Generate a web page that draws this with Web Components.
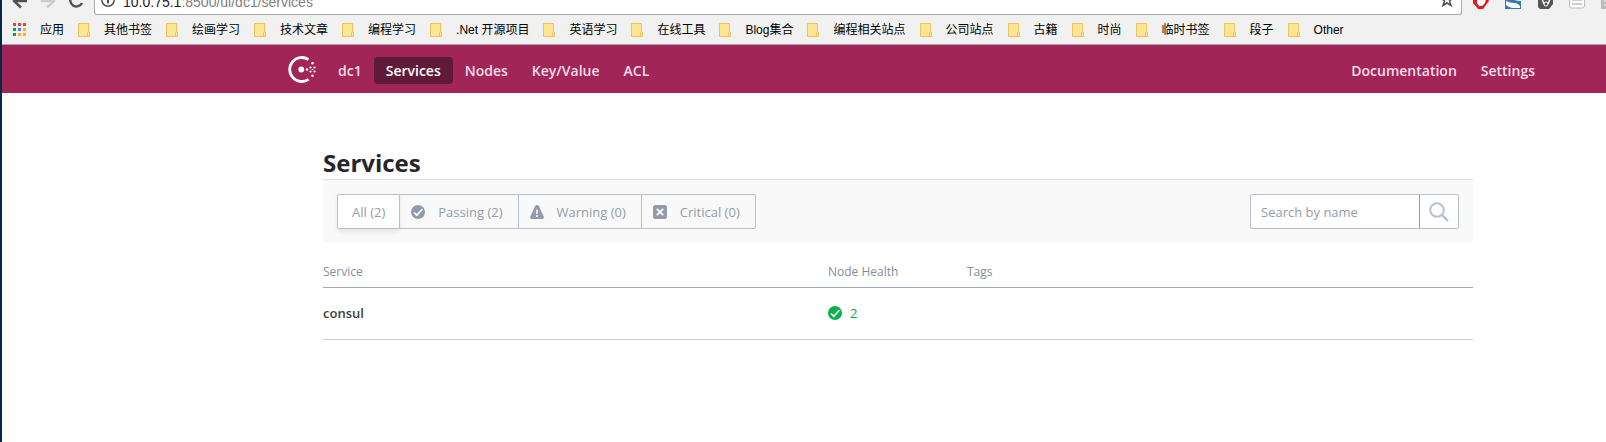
<!DOCTYPE html>
<html lang="zh">
<head>
<meta charset="utf-8">
<title>Consul - Services</title>
<style>
body { margin: 0; background: #fff; font-family: "Open Sans", "Noto Sans CJK SC", sans-serif; }
</style>
</head>
<body>
<browser-window>
  <browser-toolbar slot="chrome"></browser-toolbar>
  <bookmark-bar slot="chrome">
    <bookmark-item apps>应用</bookmark-item>
    <bookmark-item>其他书签</bookmark-item>
    <bookmark-item>绘画学习</bookmark-item>
    <bookmark-item>技术文章</bookmark-item>
    <bookmark-item>编程学习</bookmark-item>
    <bookmark-item>.Net 开源项目</bookmark-item>
    <bookmark-item>英语学习</bookmark-item>
    <bookmark-item>在线工具</bookmark-item>
    <bookmark-item>Blog集合</bookmark-item>
    <bookmark-item>编程相关站点</bookmark-item>
    <bookmark-item>公司站点</bookmark-item>
    <bookmark-item>古籍</bookmark-item>
    <bookmark-item>时尚</bookmark-item>
    <bookmark-item>临时书签</bookmark-item>
    <bookmark-item>段子</bookmark-item>
    <bookmark-item>Other</bookmark-item>
  </bookmark-bar>
  <consul-header>
    <nav-link>dc1</nav-link>
    <nav-link active>Services</nav-link>
    <nav-link>Nodes</nav-link>
    <nav-link>Key/Value</nav-link>
    <nav-link>ACL</nav-link>
    <nav-link slot="end">Documentation</nav-link>
    <nav-link slot="end">Settings</nav-link>
  </consul-header>
  <service-page></service-page>
</browser-window>

<script>
const define = (name, html) => customElements.define(name, class extends HTMLElement {
  constructor() {
    super();
    this.attachShadow({ mode: "open" }).innerHTML = html;
  }
});

define("browser-window", `
<style>
:host { display: block; min-height: 100vh; box-sizing: border-box; border-left: 2px solid #06284a; }
</style>
<slot name="chrome"></slot>
<slot></slot>`);

define("browser-toolbar", `
<style>
:host { display: flex; height: 15px; background: #f1f1f1; overflow: hidden; }
svg { display: block; flex: none; }
.nav { display: flex; width: 92px; flex: none; }
button { padding: 0; border: 0; background: none; height: 15px; }
.address { flex: 1; min-width: 0; box-sizing: border-box; height: 15px; display: flex; align-items: flex-end; justify-content: space-between;
  background: #fff; border: 1px solid #a8a8a8; border-top: 0; border-radius: 0 0 3px 3px; }
.site { display: flex; align-items: flex-end; gap: 6px; }
.url { font: 14px/16px "Liberation Sans", Arial, sans-serif; color: #808080; white-space: nowrap; margin-bottom: 4px; }
.url b { font-weight: 400; color: #222; }
.extensions { display: flex; flex: none; width: 144px; }
</style>
<div class="nav">
  <button aria-label="Back"><svg width="34" height="15" fill="none" stroke="#505050" stroke-width="2.4"><path d="M25 1H12M19 -6L12 1L19 7.500"/></svg></button>
  <button aria-label="Forward"><svg width="26" height="15" fill="none" stroke="#ccc" stroke-width="2.4"><path d="M5 1H18M11 -6L18 1L11 7.500"/></svg></button>
  <button aria-label="Reload"><svg width="32" height="15" fill="none" stroke="#505050" stroke-width="2.4"><path d="M20 3A6.200 6.200 0 1 1 19 -4"/></svg></button>
</div>
<div class="address">
  <div class="site">
    <svg width="22" height="15" fill="none" stroke="#505050" stroke-width="1.500"><circle cx="13" cy="1" r="6.200"/><path d="M13 0V4.500" stroke-width="2"/></svg>
    <span class="url"><b>10.0.75.1</b>:8500/ui/dc1/services</span>
  </div>
  <button aria-label="Bookmark"><svg width="22" height="15" fill="none" stroke="#505050" stroke-width="1.500"><path d="M8 -5L9.500 -1H14L10.500 2L12 6.500L8 4L4 6.500L5.500 2L2 -1H6.500Z"/></svg></button>
</div>
<div class="extensions">
  <svg width="144" height="15">
    <path d="M11 -4H25L27 1L21 9H16L11 3Z" fill="#e5181c"/><path d="M15 -2V3L17 6H20L23 3L24 -1Z" fill="#fff"/>
    <rect x="43" y="-7" width="16" height="16" fill="#3b79b3"/><path d="M44 1Q48 3 52 3T58 6V8H50Q46 7 44 5Z" fill="#fff"/><path d="M50 -1Q54 1 59 1V-1Z" fill="#fff"/>
    <path d="M76 -7H91V4L87 9H78L76 7Z" fill="#555"/><path d="M80 -1L82 4M88 -1L86 4" stroke="#fff" stroke-width="1.500"/><circle cx="84" cy="4" r="2" fill="none" stroke="#fff"/>
    <rect x="107.500" y="-7" width="15" height="15" rx="2" fill="#fff" stroke="#bbb"/><path d="M110 0H120M110 4H120" stroke="#ccc" stroke-width="2"/>
    <path d="M139 -3H144V9H139Z" fill="#bbb"/><path d="M142 1H144M142 5H144" stroke="#fff"/>
  </svg>
</div>`);

define("bookmark-bar", `
<style>
:host { display: flex; align-items: center; gap: 14px; height: 29px; padding: 0 11px; overflow: hidden; background: #f1f1f1; border-bottom: 1px solid #a9a6a8; }
</style>
<slot></slot>`);

define("bookmark-item", `
<style>
:host { display: block; flex: none; }
a { display: flex; align-items: center; gap: 14px; color: #000; text-decoration: none; white-space: nowrap;
  font: 12px/18px "Liberation Sans", "Noto Sans CJK SC", sans-serif; }
svg { display: block; }
.grid { display: none; }
:host([apps]) .grid { display: block; }
:host([apps]) .folder { display: none; }
</style>
<a href="#">
  <svg class="grid" width="13" height="13"><path fill="#ea4335" d="M0 0h3v3H0zM5 0h3v3H5zM10 0h3v3h-3z"/><path fill="#0f9d58" d="M0 5h3v3H0zM0 10h3v3H0z"/><path fill="#4285f4" d="M5 5h3v3H5z"/><path fill="#fbab2b" d="M10 5h3v3h-3zM5 10h3v3H5zM10 10h3v3h-3z"/></svg>
  <svg class="folder" width="12" height="14"><path d="M.5.5h10v9h1v4H.5z" fill="#fde693" stroke="#e8c55c"/><path d="M9.500 9.500v4" stroke="#e8c55c"/></svg>
  <span><slot></slot></span>
</a>`);

define("consul-header", `
<style>
:host { display: block; background: #a22558; }
header { display: flex; align-items: center; height: 48px; padding: 0 59px 0 286px; }
.logo { flex: none; margin-right: 10px; padding-top: 1px; }
svg { display: block; }
nav { display: flex; align-items: center; }
.main { flex: 1; }
</style>
<header>
  <a class="logo" href="#" aria-label="Consul"><svg width="28" height="28" fill="#fff">
    <path d="M20.500 3.600A12 12 0 1 0 20.500 23.400" fill="none" stroke="#fff" stroke-width="2.800"/>
    <circle cx="13.300" cy="13.500" r="2.900"/><circle cx="19" cy="13.500" r="1.200"/>
    <circle cx="22.500" cy="11.500" r="1.100"/><circle cx="22.500" cy="15.500" r="1.100"/>
    <circle cx="26.500" cy="11.500" r="1.100"/><circle cx="26.500" cy="15.500" r="1.100"/>
    <circle cx="24.500" cy="7.300" r="1.200"/><circle cx="24.500" cy="19.700" r="1.200"/><circle cx="24.500" cy="13.500" r=".8"/>
  </svg></a>
  <nav class="main"><slot></slot></nav>
  <nav><slot name="end"></slot></nav>
</header>`);

define("nav-link", `
<style>
:host { display: block; }
a { display: block; padding: 0 12px; font-size: 14px; font-weight: 600; line-height: 27px; margin-top: 2px; border-radius: 4px; color: #f8dfe9; text-decoration: none; white-space: nowrap; }
:host([active]) a { background: #5f1a37; color: #fff; }
</style>
<a href="#"><slot></slot></a>`);

define("health-icon", `
<style>
:host { display: block; flex: none; width: 14px; height: 14px; color: #929bab; }
svg { display: none; }
:host([kind="passing"]) .passing, :host([kind="warning"]) .warning, :host([kind="critical"]) .critical { display: block; }
</style>
<svg class="passing" width="14" height="14"><circle cx="7" cy="7" r="7" fill="currentColor"/><path d="M3 7.500L5.800 10.200L11.300 4.200" fill="none" stroke="#fff" stroke-width="1.700"/></svg>
<svg class="warning" width="14" height="14"><path d="M7 0Q8.300 0 9 1.300L13.700 11.500Q14.300 14 12.500 14H1.500Q-.3 14 .3 11.500L5 1.300Q5.700 0 7 0Z" fill="currentColor"/><path d="M7 4.500V9M7 10V12" stroke="#fff" stroke-width="1.500"/></svg>
<svg class="critical" width="14" height="14"><rect width="14" height="14" rx="2.500" fill="currentColor"/><path d="M3.800 3.800L10.200 10.200M10.200 3.800L3.800 10.200" stroke="#fff" stroke-width="1.800"/></svg>`);

define("health-filter", `
<style>
:host { display: flex; height: 35px; }
label { display: flex; align-items: center; gap: 13px; box-sizing: border-box; padding: 0 15px 0 11px; margin-left: -1px; border: 1px solid #b8bfd0;
  font-size: 13px; line-height: 20px; color: #929ca6; white-space: nowrap; cursor: pointer; }
label:first-of-type { margin-left: 0; padding: 0 14px; border-radius: 2px 0 0 2px; }
label:last-of-type { border-radius: 0 2px 2px 0; }
label:has(input:checked) { background: #fff; box-shadow: 0 3px 4px rgba(0,0,0,.08); }
input { appearance: none; position: absolute; margin: 0; width: 1px; height: 1px; }
</style>
<label><input type="radio" name="status" checked><span>All (2)</span></label>
<label><input type="radio" name="status"><health-icon kind="passing"></health-icon><span>Passing (2)</span></label>
<label><input type="radio" name="status"><health-icon kind="warning"></health-icon><span>Warning (0)</span></label>
<label><input type="radio" name="status"><health-icon kind="critical"></health-icon><span>Critical (0)</span></label>`);

define("search-box", `
<style>
:host { display: block; }
form { display: flex; box-sizing: border-box; width: 209px; height: 35px; margin: 0; border: 1px solid #b8bfd0; border-radius: 2px; background: #fff; }
input { flex: 1; min-width: 0; padding: 0 10px; border: 0; background: none; outline: 0; font: 13px/20px "Open Sans", sans-serif; color: #333; }
input::placeholder { color: #929ca6; opacity: 1; }
button { width: 39px; padding: 0; border: 0; border-left: 1px solid #929bab; background: none; }
svg { display: block; margin: 0 auto; }
</style>
<form>
  <input type="search" placeholder="Search by name" aria-label="Search by name">
  <button type="button" aria-label="Search"><svg width="20" height="20" fill="none" stroke="#b8bfd0" stroke-width="2"><circle cx="8" cy="8" r="6.800"/><path d="M12.800 12.800L19 19" stroke-width="2.400"/></svg></button>
</form>`);

define("service-table", `
<style>
:host { display: block; }
table { width: 100%; table-layout: fixed; border-collapse: collapse; }
th, td { padding: 0; text-align: left; }
th { height: 44px; padding-top: 14px; box-sizing: border-box; font-size: 12px; line-height: 18px; font-weight: 400; color: #868c9b; vertical-align: middle; border-bottom: 1px solid #9ea7b3; }
td { height: 51px; font-size: 13px; line-height: 20px; border-bottom: 1px solid #ccc; }
.name { width: 505px; }
.health { width: 139px; }
td a { font-weight: 600; color: #3c3d40; text-decoration: none; }
.count { display: flex; align-items: center; gap: 8px; color: #0aab4a; }
health-icon { color: #08b14b; }
</style>
<table>
  <thead><tr><th class="name">Service</th><th class="health">Node Health</th><th>Tags</th></tr></thead>
  <tbody><tr><td><a href="#">consul</a></td><td><span class="count"><health-icon kind="passing"></health-icon>2</span></td><td></td></tr></tbody>
</table>`);

define("service-page", `
<style>
:host { display: block; padding: 53px 133px 0 321px; }
h1 { margin: 0; font-size: 24px; line-height: 33px; font-weight: 700; color: #252629; }
.bar { display: flex; justify-content: space-between; padding: 14px; border-top: 1px solid #dbdde3; background: #f9f9f9; }
</style>
<main>
  <h1>Services</h1>
  <div class="bar"><health-filter></health-filter><search-box></search-box></div>
  <service-table></service-table>
</main>`);
</script>
</body>
</html>
